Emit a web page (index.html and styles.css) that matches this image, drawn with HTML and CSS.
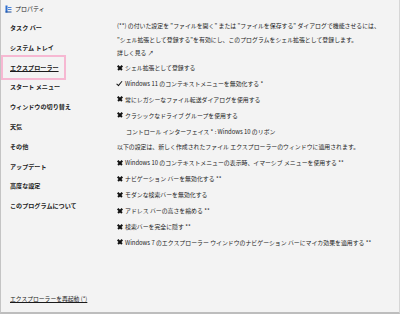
FILE: index.html
```html
<!DOCTYPE html>
<html lang="ja">
<head>
<meta charset="utf-8">
<title>プロパティ</title>
<link rel="stylesheet" href="styles.css">
</head>
<body>
<div class="window">
  <div class="titlebar">
    <svg class="appicon" width="7" height="8" viewBox="0 0 7 8">
      <rect x="0.5" y="0.5" width="2" height="7" fill="#2f6fd0"/>
      <rect x="3" y="2" width="3.5" height="1" fill="#4a84d8"/>
      <rect x="3" y="4" width="3.5" height="1" fill="#4a84d8"/>
      <rect x="0.5" y="6.5" width="6" height="1" fill="#1c4f9c"/>
    </svg>
    <span class="title">プロパティ</span>
  </div>
  <div class="main">
    <nav class="sidebar">
      <div class="nav-item">タスク バー</div>
      <div class="nav-item">システム トレイ</div>
      <div class="nav-item active">エクスプローラー</div>
      <div class="nav-item">スタート メニュー</div>
      <div class="nav-item">ウィンドウの切り替え</div>
      <div class="nav-item">天気</div>
      <div class="nav-item">その他</div>
      <div class="nav-item">アップデート</div>
      <div class="nav-item">高度な設定</div>
      <div class="nav-item">このプログラムについて</div>
      <div class="restart">エクスプローラーを再起動 (*)</div>
    </nav>
    <section class="content">
      <p class="note">(**) の付いた設定を "ファイルを開く" または "ファイルを保存する" ダイアログで機能させるには、</p>
      <p class="note">"シェル拡張として登録する"を有効にし、このプログラムをシェル拡張として登録します。</p>
      <p class="note">詳しく見る ↗</p>
      <div class="row"><span class="mark x"></span><span>シェル拡張として登録する</span></div>
      <div class="row"><span class="mark v"></span><span>Windows 11 のコンテキストメニューを無効化する *</span></div>
      <div class="row"><span class="mark x"></span><span>常にレガシーなファイル転送ダイアログを使用する</span></div>
      <div class="row"><span class="mark x"></span><span>クラシックなドライブ グループを使用する</span></div>
      <div class="row indent"><span>コントロール インターフェイス * : Windows 10 のリボン</span></div>
      <div class="row plain"><span>以下の設定は、新しく作成されたファイル エクスプローラーのウィンドウに適用されます。</span></div>
      <div class="row"><span class="mark x"></span><span>Windows 10 のコンテキストメニューの表示時、イマーシブ メニューを使用する **</span></div>
      <div class="row"><span class="mark x"></span><span>ナビゲーション バーを無効化する **</span></div>
      <div class="row"><span class="mark x"></span><span>モダンな検索バーを無効化する</span></div>
      <div class="row"><span class="mark x"></span><span>アドレス バーの高さを縮める **</span></div>
      <div class="row"><span class="mark x"></span><span>検索バーを完全に隠す **</span></div>
      <div class="row"><span class="mark x"></span><span>Windows 7 のエクスプローラー ウインドウのナビゲーション バーにマイカ効果を適用する **</span></div>
    </section>
  </div>
</div>
</body>
</html>
```
FILE: styles.css
```css
* { box-sizing: border-box; }
html, body { margin: 0; padding: 0; }
body {
  width: 400px;
  height: 314px;
  background: #f3f3f3;
  font-family: "Noto Sans CJK JP", "Noto Sans", sans-serif;
  color: #1b1b1b;
  font-size: 6px;
}
.window {
  width: 400px;
  height: 314px;
  border-left: 1px solid #c4c4c4;
  border-right: 1px solid #d6d6d6;
  border-bottom: 2px solid #bdbdbd;
  display: flex;
  flex-direction: column;
  background: #f3f3f3;
}
.titlebar {
  height: 18px;
  display: flex;
  align-items: center;
  padding-left: 4px;
  gap: 3px;
  flex: none;
}
.appicon { display: block; }
.title { font-size: 6px; line-height: 8px; color: #222; }
.main {
  flex: 1;
  display: flex;
}
.sidebar {
  width: 115px;
  flex: none;
  display: flex;
  flex-direction: column;
  padding-bottom: 8px;
}
.nav-item {
  height: 19.8px;
  line-height: 19.8px;
  margin-left: 3px;
  width: 59px;
  padding-left: 6px;
  font-weight: bold;
  font-size: 6.1px;
  white-space: nowrap;
}
.nav-item.active {
  outline: 2px solid #f6b8d2;
  outline-offset: 1px;
  text-decoration: underline;
}
.restart {
  margin-top: auto;
  padding-left: 9px;
  font-size: 5.8px;
  line-height: 10px;
  text-decoration: underline;
  white-space: nowrap;
}
.content {
  flex: 1;
  padding-top: 1px;
  padding-left: 1px;
}
.note {
  margin: 0;
  line-height: 13.5px;
  font-size: 5.9px;
  white-space: nowrap;
}
.row {
  height: 15.9px;
  display: flex;
  align-items: center;
  font-size: 5.9px;
  white-space: nowrap;
}
.row.indent { padding-left: 9px; }
.mark {
  width: 5px;
  height: 5px;
  margin-right: 3px;
  flex: none;
  position: relative;
}
.mark.x::before, .mark.x::after {
  content: "";
  position: absolute;
  left: -0.5px;
  top: 1.7px;
  width: 6px;
  height: 1.5px;
  background: #111;
  transform: rotate(45deg);
}
.mark.x::after { transform: rotate(-45deg); }
.mark.v::before {
  content: "";
  position: absolute;
  left: 1px;
  top: -0.5px;
  width: 2px;
  height: 4.5px;
  border-right: 1.5px solid #111;
  border-bottom: 1.5px solid #111;
  transform: rotate(40deg);
}
```
